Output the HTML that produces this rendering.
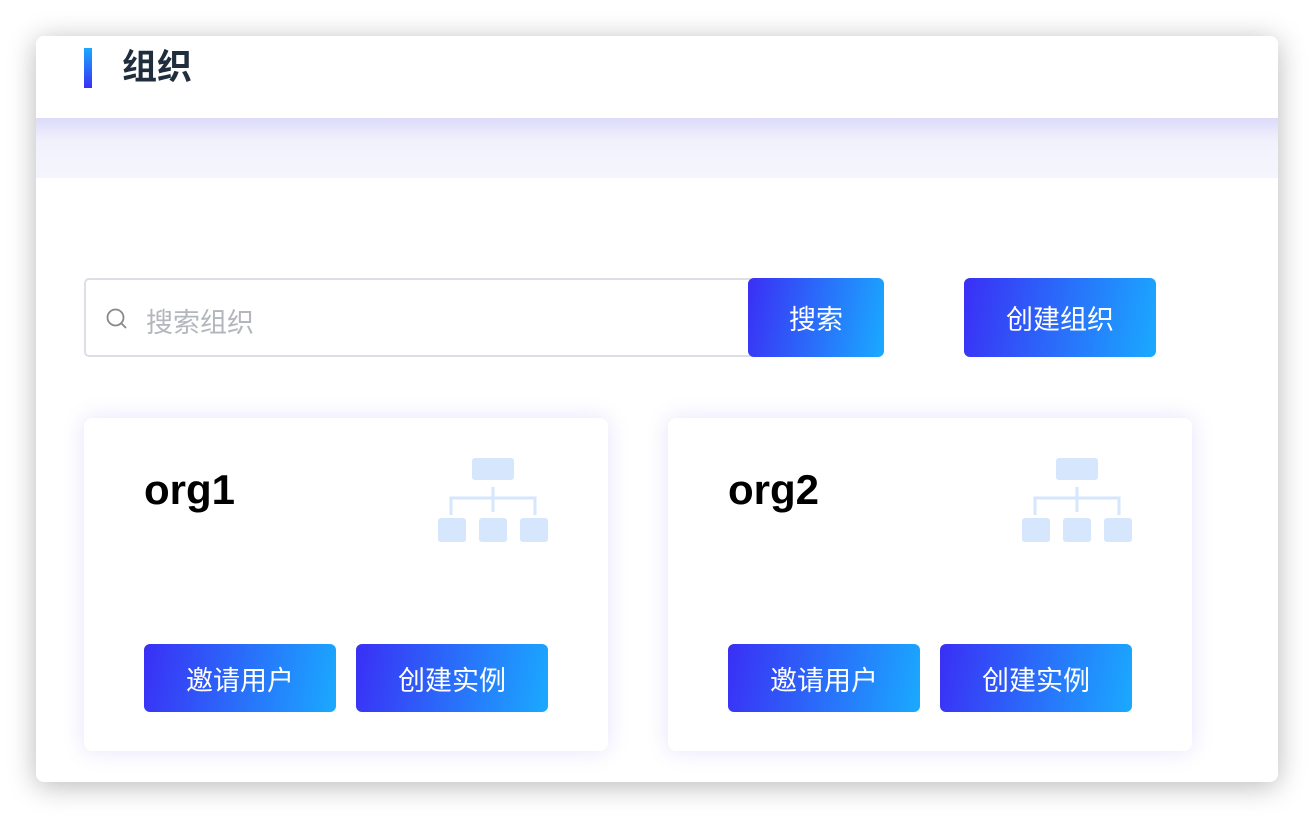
<!DOCTYPE html>
<html><head><meta charset="utf-8"><style>
*{box-sizing:border-box;margin:0;padding:0}
body{width:1314px;height:818px;background:#fff;font-family:"Liberation Sans","Noto Sans CJK SC",sans-serif;position:relative;overflow:hidden}
.win{position:absolute;left:36px;top:36px;width:1242px;height:746px;background:#fff;border-radius:8px;box-shadow:0 4px 28px rgba(0,0,0,.28);overflow:hidden}
.hdr{position:absolute;left:0;top:0;width:100%;height:82px;background:#fff;z-index:2}
.bar{position:absolute;left:48px;top:12px;width:8px;height:40px;background:linear-gradient(#1aaaff,#3a2ff5)}
.title{position:absolute;left:86px;top:10px;font-size:35px;font-weight:bold;color:#1f2d3d;line-height:44px}
.band{position:absolute;left:0;top:82px;width:100%;height:60px;background:linear-gradient(#dcdafa,#f2f2fd 40%,#f5f5fd)}
.inp{position:absolute;left:48px;top:242px;width:676px;height:79px;border:2px solid #dcdfe6;border-radius:5px}
.inp span{position:absolute;left:60px;top:21px;font-size:27px;color:#b3b6bd}
.btn{position:absolute;background:linear-gradient(100deg,#3a2ff5,#1aaaff);color:#fff;border-radius:6px;font-size:27px;display:flex;align-items:center;justify-content:center}
.card{position:absolute;top:382px;width:524px;height:333px;background:#fff;border-radius:8px;box-shadow:0 0 22px rgba(110,100,240,.18)}
.card h2{position:absolute;left:60px;top:48px;font-size:42px;font-weight:bold;color:#000}
.card svg{position:absolute;left:354px;top:40px}
</style></head><body>
<div class="win">
<div class="hdr"><div class="bar"></div><div class="title">组织</div></div>
<div class="band"></div>
<div class="inp"><svg style="position:absolute;left:20px;top:28px" width="22" height="22" viewBox="0 0 22 22"><circle cx="9.5" cy="9.5" r="8" fill="none" stroke="#888" stroke-width="1.8"/><path d="M15.5 15.5L20 20" stroke="#888" stroke-width="1.8"/></svg><span>搜索组织</span></div>
<div class="btn" style="left:712px;top:242px;width:136px;height:79px">搜索</div>
<div class="btn" style="left:928px;top:242px;width:192px;height:79px">创建组织</div>
<div class="card" style="left:48px"><h2>org1</h2>
<svg width="110" height="85" viewBox="0 0 110 85"><g fill="#d6e6fd"><rect x="34" y="0" width="42" height="22" rx="3"/><rect x="0" y="60" width="28" height="24" rx="3"/><rect x="41" y="60" width="28" height="24" rx="3"/><rect x="82" y="60" width="28" height="24" rx="3"/></g><path d="M55 29v25M13 57V40h84v17" fill="none" stroke="#d6e6fd" stroke-width="3"/></svg>
<div class="btn" style="left:60px;top:226px;width:192px;height:68px">邀请用户</div>
<div class="btn" style="left:272px;top:226px;width:192px;height:68px">创建实例</div></div>
<div class="card" style="left:632px"><h2>org2</h2>
<svg width="110" height="85" viewBox="0 0 110 85"><g fill="#d6e6fd"><rect x="34" y="0" width="42" height="22" rx="3"/><rect x="0" y="60" width="28" height="24" rx="3"/><rect x="41" y="60" width="28" height="24" rx="3"/><rect x="82" y="60" width="28" height="24" rx="3"/></g><path d="M55 29v25M13 57V40h84v17" fill="none" stroke="#d6e6fd" stroke-width="3"/></svg>
<div class="btn" style="left:60px;top:226px;width:192px;height:68px">邀请用户</div>
<div class="btn" style="left:272px;top:226px;width:192px;height:68px">创建实例</div></div>
</div>
</body></html>
